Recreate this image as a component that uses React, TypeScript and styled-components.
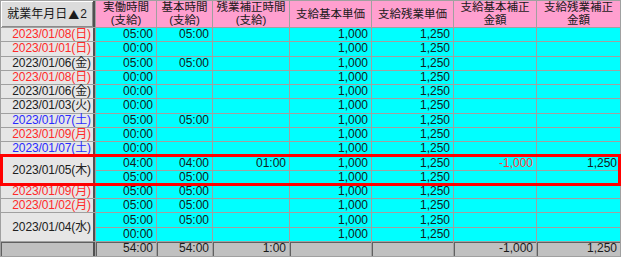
import React from 'react';
import styled, { createGlobalStyle } from 'styled-components';

type Tone = 'red' | 'blue' | 'black';

interface Row {
    date?: string;
    tone?: Tone;
    span?: number;
    cells: string[];
    negIndex?: number;
}

const GlobalStyle = createGlobalStyle`
	html, body {
		margin: 0;
		padding: 0;
		background: #ffffff;
	}
	body {
		font-family: 'Liberation Sans', 'Noto Sans CJK JP', sans-serif;
		font-size: 12px;
	}
`;

const toneColor: Record<Tone, string> = {
    red: '#ff2a2a',
    blue: '#2a2aff',
    black: '#202020'
};

const Table = styled.div`
	position: relative;
	display: grid;
	grid-template-columns: 94px 60px 55px 76px 81px 81px 82px 83px;
	grid-template-rows: 26px repeat(15, 1fr) 14px;
	gap: 1px;
	width: 621px;
	height: 257px;
	box-sizing: border-box;
	padding: 1px;
	background: #a0a0a0;
	color: #1a1a1a;
`;

const DateHead = styled.div`
	display: flex;
	align-items: center;
	justify-content: center;
	background: #dcdcdc;
	border-right: 2px solid #505050;
	box-shadow: inset 1px 1px 0 #ffffff, inset -1px -1px 0 #8a8a8a;
	line-height: 14px;
	white-space: nowrap;
`;

const SortMark = styled.span`
	font-family: 'Noto Sans CJK JP', sans-serif;
	font-size: 11px;
	line-height: 13px;
	margin: 0 1px;
`;

const Head = styled.div`
	display: flex;
	flex-direction: column;
	align-items: center;
	justify-content: center;
	background: #ff9fcf;
	font-size: 11.5px;
	line-height: 13px;
	white-space: nowrap;
`;

const DateCell = styled.div<{ $tone: Tone; $span: number }>`
	grid-row: span ${(p) => p.$span};
	display: flex;
	align-items: center;
	justify-content: flex-end;
	padding-right: 2px;
	background: #e6e6e6;
	border-right: 2px solid #505050;
	color: ${(p) => toneColor[p.$tone]};
	line-height: 13px;
	letter-spacing: -0.1px;
	white-space: nowrap;
`;

const Cell = styled.div<{ $neg?: boolean }>`
	display: flex;
	align-items: center;
	justify-content: flex-end;
	padding-right: 3px;
	background: #00ffff;
	color: ${(p) => (p.$neg ? '#ff3a3a' : '#102020')};
	line-height: 13px;
	white-space: nowrap;
`;

const FootBlank = styled.div`
	background: #c0c0c0;
	border-right: 2px solid #505050;
	box-shadow: inset 1px 1px 0 #606060;
`;

const FootCell = styled.div`
	display: flex;
	align-items: center;
	justify-content: flex-end;
	padding-right: 3px;
	background: #c0c0c0;
	box-shadow: inset 1px 1px 0 #606060;
	line-height: 13px;
	white-space: nowrap;
`;

const Highlight = styled.div<{ $row: number }>`
	position: absolute;
	grid-row: ${(p) => p.$row} / span 2;
	grid-column: 1 / -1;
	top: -2px;
	bottom: -2px;
	left: -1px;
	right: -1px;
	border: 3px solid #ff0000;
	pointer-events: none;
`;

const headers: string[][] = [
    ['実働時間', '(支給)'],
    ['基本時間', '(支給)'],
    ['残業補正時間', '(支給)'],
    ['支給基本単価'],
    ['支給残業単価'],
    ['支給基本補正', '金額'],
    ['支給残業補正', '金額']
];

const base = (a: string, b = ''): string[] => [a, b, '', '1,000', '1,250', '', ''];

const rows: Row[] = [
    { date: '2023/01/08(日)', tone: 'red', cells: base('05:00', '05:00') },
    { date: '2023/01/01(日)', tone: 'red', cells: base('00:00') },
    { date: '2023/01/06(金)', tone: 'black', cells: base('05:00', '05:00') },
    { date: '2023/01/08(日)', tone: 'red', cells: base('00:00') },
    { date: '2023/01/06(金)', tone: 'black', cells: base('00:00') },
    { date: '2023/01/03(火)', tone: 'black', cells: base('00:00') },
    { date: '2023/01/07(土)', tone: 'blue', cells: base('05:00', '05:00') },
    { date: '2023/01/09(月)', tone: 'red', cells: base('00:00') },
    { date: '2023/01/07(土)', tone: 'blue', cells: base('00:00') },
    {
        date: '2023/01/05(木)',
        tone: 'black',
        span: 2,
        cells: ['04:00', '04:00', '01:00', '1,000', '1,250', '-1,000', '1,250'],
        negIndex: 5
    },
    { cells: base('05:00', '05:00') },
    { date: '2023/01/09(月)', tone: 'red', cells: base('05:00', '05:00') },
    { date: '2023/01/02(月)', tone: 'red', cells: base('05:00', '05:00') },
    { date: '2023/01/04(水)', tone: 'black', span: 2, cells: base('05:00', '05:00') },
    { cells: base('00:00') }
];

const totals = ['54:00', '54:00', '1:00', '', '', '-1,000', '1,250'];

export default function App() {
    return (
        <>
            <GlobalStyle />
            <Table>
                <DateHead>
                    就業年月日<SortMark>▲</SortMark>2
                </DateHead>
                {headers.map((lines, i) => (
                    <Head key={i}>
                        {lines.map((l) => (
                            <span key={l}>{l}</span>
                        ))}
                    </Head>
                ))}
                {rows.map((row, r) => (
                    <React.Fragment key={r}>
                        {row.date && (
                            <DateCell $tone={row.tone ?? 'black'} $span={row.span ?? 1}>
                                {row.date}
                            </DateCell>
                        )}
                        {row.cells.map((c, i) => (
                            <Cell key={i} $neg={row.negIndex === i}>
                                {c}
                            </Cell>
                        ))}
                    </React.Fragment>
                ))}
                <FootBlank />
                {totals.map((t, i) => (
                    <FootCell key={i}>{t}</FootCell>
                ))}
                <Highlight $row={11} />
            </Table>
        </>
    );
}
